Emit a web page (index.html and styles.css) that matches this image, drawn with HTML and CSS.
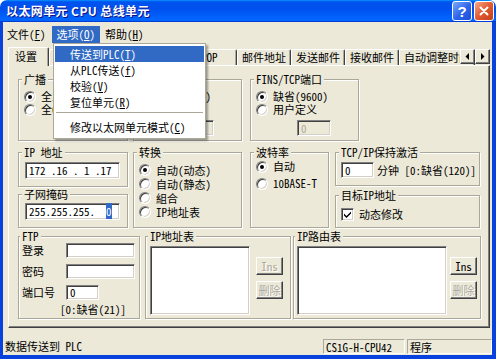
FILE: index.html
```html
<!DOCTYPE html>
<html>
<head>
<meta charset="utf-8">
<title>以太网单元 CPU 总线单元</title>
<link rel="stylesheet" href="styles.css">
</head>
<body>
<div class="window">
  <div class="titlebar">
    <span class="title">以太网单元 CPU 总线单元</span>
    <span class="tbtn help">?</span>
    <span class="tbtn close"><svg width="12" height="12" viewBox="0 0 12 12"><path d="M2.5 2.5L9.5 9.5M9.5 2.5L2.5 9.5" stroke="#fff" stroke-width="2" stroke-linecap="round"/></svg></span>
  </div>
  <div class="client">
    <div class="menubar">
      <span class="mi first">文件(<u>F</u>)</span>
      <span class="mi active">选项(<u>O</u>)</span>
      <span class="mi">帮助(<u>H</u>)</span>
    </div>
    <div class="tabstrip">
      <div class="tabs">
        <span class="tab sel">设置</span>
        <span class="tab t-dns"></span>
        <span class="tab t-smtp"></span>
        <span class="tab t-pop">POP</span>
        <span class="tab">邮件地址</span>
        <span class="tab">发送邮件</span>
        <span class="tab">接收邮件</span>
        <span class="tab">自动调整时间</span>
      </div>
      <span class="arrow"><svg width="5" height="7" viewBox="0 0 5 7"><path d="M4 0V7L0.5 3.5Z" fill="#000"/></svg></span>
      <span class="arrow"><svg width="5" height="7" viewBox="0 0 5 7"><path d="M1 0V7L4.5 3.5Z" fill="#000"/></svg></span>
    </div>
    <div class="panel">
      <div class="row r1">
        <div class="grp g-bc">
          <div class="lg">广播</div>
          <div class="opts">
            <div class="opt"><i class="radio on"></i>全1(4.3BSD)</div>
            <div class="opt"><i class="radio"></i>全0(4.2BSD)</div>
          </div>
        </div>
        <div class="grp g-udp">
          <div class="lg lg-hidden"></div>
          <div class="opts">
            <div class="opt"><i class="radio on"></i>缺省(9600)</div>
            <div class="opt"><i class="radio"></i>用户定义</div>
          </div>
          <div class="tb dis port">0</div>
        </div>
        <div class="grp g-tcp">
          <div class="lg">FINS/TCP端口</div>
          <div class="opts">
            <div class="opt"><i class="radio on"></i>缺省(9600)</div>
            <div class="opt"><i class="radio"></i>用户定义</div>
          </div>
          <div class="tb dis port">0</div>
        </div>
      </div>
      <div class="row r2">
        <div class="col c1">
          <div class="grp g-ip">
            <div class="lg">IP 地址</div>
            <div class="tb ipbox">172 .16 . 1 .17</div>
          </div>
          <div class="grp g-mask">
            <div class="lg">子网掩码</div>
            <div class="tb ipbox">255.255.255.  <span class="hl">0</span></div>
          </div>
        </div>
        <div class="grp g-conv">
          <div class="lg">转换</div>
          <div class="opts">
            <div class="opt"><i class="radio on"></i>自动(动态)</div>
            <div class="opt"><i class="radio"></i>自动(静态)</div>
            <div class="opt"><i class="radio"></i>組合</div>
            <div class="opt"><i class="radio"></i>IP地址表</div>
          </div>
        </div>
        <div class="grp g-baud">
          <div class="lg">波特率</div>
          <div class="opts">
            <div class="opt"><i class="radio on"></i>自动</div>
            <div class="opt"><i class="radio"></i>10BASE-T</div>
          </div>
        </div>
        <div class="col c4">
          <div class="grp g-keep">
            <div class="lg">TCP/IP保持激活</div>
            <div class="line"><div class="tb keep">0</div><span class="unit">分钟 [0:缺省(120)]</span></div>
          </div>
          <div class="grp g-dest">
            <div class="lg">目标IP地址</div>
            <div class="opt chk"><i class="check"><svg width="9" height="9" viewBox="0 0 9 9"><path d="M1 3.5L3.5 6L8 1.5V3.5L3.5 8L1 5.5Z" fill="#000"/></svg></i>动态修改</div>
          </div>
        </div>
      </div>
      <div class="row r3">
        <div class="grp g-ftp">
          <div class="lg">FTP</div>
          <div class="frow"><span class="flbl">登录</span><div class="tb ftpin"></div></div>
          <div class="frow"><span class="flbl">密码</span><div class="tb ftpin"></div></div>
          <div class="frow"><span class="flbl">端口号</span><div class="tb ftpport">0</div></div>
          <div class="fnote">[0:缺省(21)]</div>
        </div>
        <div class="grp g-iptab">
          <div class="lg">IP地址表</div>
          <div class="lbwrap">
            <div class="list l-ip"></div>
            <div class="btns"><span class="btn dis">Ins</span><span class="btn dis">删除</span></div>
          </div>
        </div>
        <div class="grp g-route">
          <div class="lg">IP路由表</div>
          <div class="lbwrap">
            <div class="list l-route"></div>
            <div class="btns"><span class="btn">Ins</span><span class="btn dis">删除</span></div>
          </div>
        </div>
      </div>
    </div>
    <div class="status">
      <span class="smsg">数据传送到 PLC</span>
      <span class="spane p1">CS1G-H-CPU42</span>
      <span class="spane p2">程序</span>
    </div>
  </div>
  <div class="dropdown">
    <div class="dd-item on">传送到PLC(<u>T</u>)</div>
    <div class="dd-item">从PLC传送(<u>f</u>)</div>
    <div class="dd-item">校验(<u>V</u>)</div>
    <div class="dd-item">复位单元(<u>R</u>)</div>
    <div class="dd-sep"></div>
    <div class="dd-item">修改以太网单元模式(<u>C</u>)</div>
  </div>
</div>
</body>
</html>
```
FILE: styles.css
```css
* { box-sizing: border-box; }
html, body { margin: 0; padding: 0; }
body {
  width: 496px; height: 359px; overflow: hidden; background: #fff;
  font-family: "Noto Sans Mono CJK SC", "Noto Sans CJK SC", sans-serif;
  font-size: 11px; line-height: 13px; color: #000;
}
.window { position: relative; width: 496px; height: 359px; display: flex; flex-direction: column; }

.titlebar {
  flex: none; height: 22px; display: flex; align-items: center; padding: 0 2px 0 6px;
  border-radius: 7px 7px 0 0;
  background: linear-gradient(#0997ff, #0053ee 8%, #0050ee 40%, #06f 88%, #06f 93%, #005bff 95%, #003dd7 96%, #003dd7);
}
.title {
  flex: 1; color: #fff; font-family: "Noto Sans CJK SC", sans-serif; font-weight: bold;
  font-size: 12px; letter-spacing: 0.4px; text-shadow: 1px 1px #0f1089; line-height: 16px;
}
.tbtn {
  width: 20px; height: 20px; border: 1px solid #fff; border-radius: 3px; margin-left: 2px;
  display: flex; align-items: center; justify-content: center; color: #fff;
}
.help {
  background: linear-gradient(135deg, #7aa8fa, #2d63ea 55%, #1b4ed8);
  font-family: "Liberation Sans", sans-serif; font-weight: bold; font-size: 15px;
}
.close { background: linear-gradient(135deg, #f4a98a, #e25a31 50%, #c33e17); }

.client {
  flex: 1; display: flex; flex-direction: column; background: #ece9d8;
  border-style: solid; border-width: 0 4px 4px 3px; border-color: #0842de;
  padding: 0 2px 0 5px;
}

.menubar { height: 21px; display: flex; align-items: flex-end; margin-left: -5px; }
.mi { height: 17px; line-height: 17px; padding: 0 5px; }
.mi.first { padding: 0 6px 0 4px; }
.mi.active { background: #316ac5; color: #fff; }

.tabstrip { margin-top: 4px; height: 18px; display: flex; align-items: flex-end; }
.tabs { width: 452px; display: flex; align-items: flex-end; height: 18px; }
.tab {
  flex: none; height: 16px; line-height: 15px; padding: 0 4px; white-space: nowrap;
  border: 1px solid; border-bottom: none; border-color: #fff #404040 #404040 #fff;
  box-shadow: inset -1px 0 #aca899; border-radius: 2px 2px 0 0;
}
.tab.sel {
  position: relative; z-index: 1; height: 19px; margin-bottom: -1px; padding: 1px 11px 0 6px;
  background: #ece9d8;
}
.t-dns { width: 67px; }
.t-smtp { width: 73px; }
.t-pop { width: 48px; padding-left: 11px; }
.arrow {
  position: relative; z-index: 2; flex: none; width: 15px; height: 15px; margin-bottom: 1px;
  background: #ece9d8; display: flex; align-items: center; justify-content: center;
  border: 1px solid; border-color: #fff #404040 #404040 #fff; box-shadow: inset -1px -1px #808080;
}

.panel {
  flex: none; height: 263px; padding-left: 9px;
  border: 1px solid; border-color: #fff #404040 #404040 #fff; box-shadow: inset -1px -1px #808080;
}
.row { display: flex; align-items: flex-start; }
.r1 { margin-top: 13px; }
.r2 { margin-top: 11px; }
.r3 { margin-top: 8px; }
.col { display: flex; flex-direction: column; }

.grp {
  flex: none; border: 1px solid #aca899; box-shadow: inset 1px 1px #fff, 1px 1px #fff;
  padding-left: 5px;
}
.lg {
  display: table; height: 13px; line-height: 13px; margin: -7px 0 0 -2px; padding: 0 2px;
  background: #ece9d8; white-space: nowrap;
}
.lg-hidden { width: 60px; }
.opt { display: flex; align-items: center; height: 13px; white-space: nowrap; }
.opt .radio, .opt .check { margin-right: 5px; }
.radio {
  position: relative; flex: none; width: 12px; height: 12px; border-radius: 50%; background: #fff;
  border: 1px solid; border-color: #808080 #fff #fff #808080;
  box-shadow: inset 1px 1px 0 #404040, inset -1px -1px 0 #d4d0c8;
}
.radio.on::after {
  content: ""; position: absolute; left: 3px; top: 3px; width: 4px; height: 4px; border-radius: 50%; background: #000;
}
.check {
  flex: none; width: 13px; height: 13px; background: #fff; display: flex; align-items: center; justify-content: center;
  border: 1px solid; border-color: #808080 #fff #fff #808080;
  box-shadow: inset 1px 1px 0 #404040, inset -1px -1px 0 #d4d0c8;
}

.tb {
  background: #fff; border: 1px solid; border-color: #808080 #fff #fff #808080;
  box-shadow: inset 1px 1px 0 #404040, inset -1px -1px 0 #d4d0c8;
  padding-left: 3px; white-space: pre;
}
.tb.dis { background: #ece9d8; color: #aca899; }

.g-bc { width: 110px; height: 62px; }
.g-udp { width: 109px; height: 62px; margin-left: 5px; }
.g-tcp { width: 109px; height: 62px; margin-left: 8px; }
.r1 .opts { margin-top: 4px; }
.port { width: 34px; height: 16px; line-height: 14px; margin: 4px 0 0 41px; }

.c1 { width: 110px; }
.g-ip { width: 110px; height: 35px; }
.g-mask { width: 110px; height: 34px; margin-top: 7px; }
.ipbox { width: 95px; height: 17px; line-height: 15px; margin: 3px 0 0 1px; padding-left: 3px; }
.g-mask .ipbox { margin-top: 2px; }
.hl { background: #316ac5; color: #fff; }
.g-conv { width: 109px; height: 76px; margin-left: 5px; }
.g-conv .opts { margin-top: 4px; }
.g-conv .opt { height: 14px; }
.g-baud { width: 79px; height: 76px; margin-left: 8px; }
.g-baud .opts { margin-top: 1px; }
.g-baud .opt + .opt { margin-top: 4px; }
.c4 { width: 145px; margin-left: 6px; }
.g-keep { width: 145px; height: 34px; }
.g-dest { width: 145px; height: 33px; margin-top: 9px; }
.line { display: flex; align-items: center; margin-top: 3px; }
.keep { width: 33px; height: 16px; line-height: 14px; flex: none; }
.unit { margin-left: 3px; white-space: nowrap; }
.chk { margin-top: 5px; height: 14px; }

.g-ftp { width: 122px; height: 83px; padding-left: 3px; }
.frow { display: flex; align-items: center; height: 15px; }
.frow + .frow { margin-top: 6px; }
.frow:nth-of-type(2) { margin-top: 0; }
.flbl { width: 44px; flex: none; }
.ftpin { width: 69px; height: 15px; }
.ftpport { width: 33px; height: 15px; line-height: 13px; }
.fnote { margin: 3px 0 0 38px; white-space: nowrap; }

.g-iptab { width: 146px; height: 83px; margin-left: 5px; padding-left: 4px; }
.g-route { width: 188px; height: 83px; margin-left: 2px; padding-left: 3px; }
.lbwrap { display: flex; margin-top: 3px; }
.list {
  flex: none; height: 69px; background: #fff;
  border: 1px solid; border-color: #808080 #fff #fff #808080;
  box-shadow: inset 1px 1px 0 #404040, inset -1px -1px 0 #d4d0c8;
}
.l-ip { width: 100px; }
.l-route { width: 150px; }
.btns { display: flex; flex-direction: column; margin-top: 11px; }
.g-iptab .btns { margin-left: 6px; }
.g-route .btns { margin-left: 3px; }
.btn {
  width: 27px; height: 18px; display: flex; align-items: center; justify-content: center;
  background: #ece9d8; border: 1px solid; border-color: #fff #404040 #404040 #fff;
  box-shadow: inset -1px -1px #808080;
}
.btn + .btn { margin-top: 6px; }
.btn.dis { color: #aca899; text-shadow: 1px 1px #fff; }

.status { flex: 1; display: flex; align-items: flex-end; padding-bottom: 1px; margin-left: -5px; margin-right: -2px; }
.smsg { flex: 1; padding-left: 2px; height: 15px; line-height: 15px; }
.spane {
  height: 15px; line-height: 14px; padding-left: 2px;
  border: 1px solid; border-color: #aca899 #fff #fff #aca899;
}
.p1 { width: 82px; }
.p2 { width: 85px; margin-left: 2px; }

.dropdown {
  position: absolute; left: 53px; top: 43px; width: 153px; height: 96px; padding: 2px 1px;
  background: #fff; border: 1px solid #aca899; box-shadow: 2px 2px 2px rgba(0, 0, 0, 0.35);
}
.dd-item { height: 16px; line-height: 16px; padding-left: 15px; white-space: nowrap; }
.dd-item.on { background: #316ac5; color: #fff; }
.dd-sep { height: 1px; margin: 2px 1px 6px; background: #aca899; }
.dd-sep + .dd-item { height: 17px; line-height: 17px; }
```
